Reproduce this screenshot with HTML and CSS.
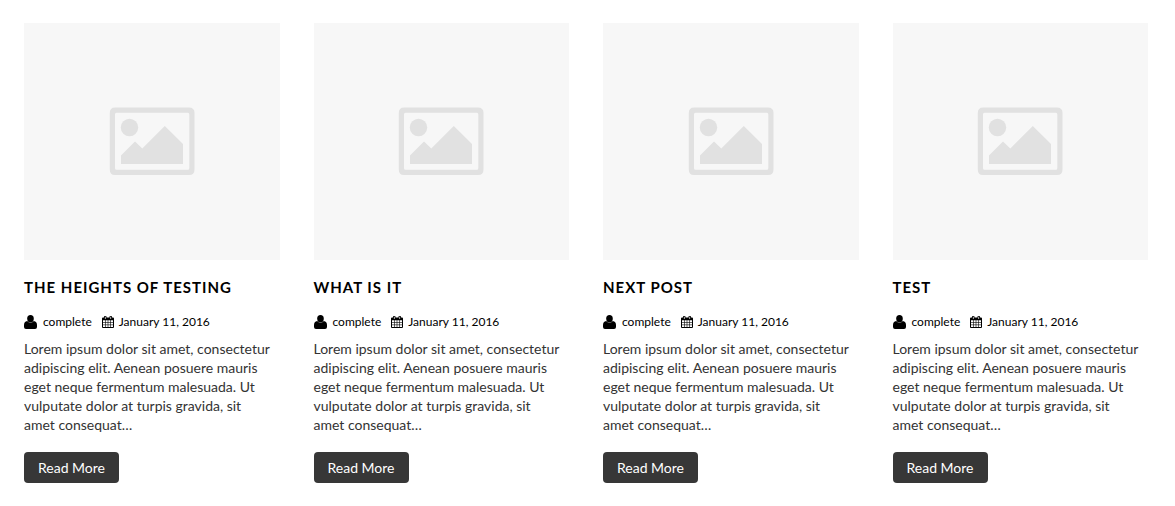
FILE: index.html
```html
<!DOCTYPE html>
<html lang="en">
<head>
<meta charset="utf-8">
<title>Posts</title>
<link rel="stylesheet" href="styles.css">
</head>
<body>
<svg class="sprite" aria-hidden="true">
  <symbol id="picture" viewBox="0 0 86 68">
    <path fill-rule="evenodd" d="M6 .5H80Q85.500 .5 85.500 6V62.500Q85.500 68 80 68H6Q.8 68 .8 62.500V6Q.8 .5 6 .5ZM7.500 5.800Q6 5.800 6 7.300V61.200Q6 62.700 7.500 62.700H79Q80.300 62.700 80.300 61.200V7.300Q80.300 5.800 79 5.800Z"/>
    <circle cx="20.500" cy="20.500" r="8.700"/>
    <path d="M12 57V48.500L26 34.500L33.300 41.600L55.800 19L74 37V57Z"/>
  </symbol>
  <symbol id="user" viewBox="0 0 13 14">
    <ellipse cx="6.500" cy="3.700" rx="3.300" ry="3.700"/>
    <path d="M3.200 6Q0 6.400 0 10V12Q0 14 2 14H11Q13 14 13 12V10Q13 6.400 9.800 6Q8.500 7.700 6.500 7.700T3.200 6Z"/>
  </symbol>
  <symbol id="calendar" viewBox="0 0 12 12">
    <path fill-rule="evenodd" d="M1 1.500H2V.8Q2 0 2.800 0H3.700Q4.500 0 4.500 .8V1.500H7.500V.8Q7.500 0 8.300 0H9.200Q10 0 10 .8V1.500H11Q12 1.500 12 2.500V11Q12 12 11 12H1Q0 12 0 11V2.500Q0 1.500 1 1.500ZM1 4.300V11H11V4.300ZM2.900 .8V3H3.600V.8ZM8.400 .8V3H9.100V.8Z"/>
    <path fill="none" stroke="#000" stroke-width=".6" d="M3.500 4V11M6 4V11M8.500 4V11M1 6.500H11M1 8.800H11"/>
  </symbol>
</svg>
<main class="posts">
  <article class="post">
    <div class="thumb"><svg class="picture"><use href="#picture"/></svg></div>
    <h2 class="title">The Heights of Testing</h2>
    <div class="meta"><svg class="user"><use href="#user"/></svg><span class="author">complete</span><svg class="calendar"><use href="#calendar"/></svg><time datetime="2016-01-11">January 11, 2016</time></div>
    <p class="excerpt">Lorem ipsum dolor sit amet, consectetur adipiscing elit. Aenean posuere mauris eget neque fermentum malesuada. Ut vulputate dolor at turpis gravida, sit amet consequat…</p>
    <a class="more" href="#">Read More</a>
  </article>
  <article class="post">
    <div class="thumb"><svg class="picture"><use href="#picture"/></svg></div>
    <h2 class="title">What is it</h2>
    <div class="meta"><svg class="user"><use href="#user"/></svg><span class="author">complete</span><svg class="calendar"><use href="#calendar"/></svg><time datetime="2016-01-11">January 11, 2016</time></div>
    <p class="excerpt">Lorem ipsum dolor sit amet, consectetur adipiscing elit. Aenean posuere mauris eget neque fermentum malesuada. Ut vulputate dolor at turpis gravida, sit amet consequat…</p>
    <a class="more" href="#">Read More</a>
  </article>
  <article class="post">
    <div class="thumb"><svg class="picture"><use href="#picture"/></svg></div>
    <h2 class="title">Next Post</h2>
    <div class="meta"><svg class="user"><use href="#user"/></svg><span class="author">complete</span><svg class="calendar"><use href="#calendar"/></svg><time datetime="2016-01-11">January 11, 2016</time></div>
    <p class="excerpt">Lorem ipsum dolor sit amet, consectetur adipiscing elit. Aenean posuere mauris eget neque fermentum malesuada. Ut vulputate dolor at turpis gravida, sit amet consequat…</p>
    <a class="more" href="#">Read More</a>
  </article>
  <article class="post">
    <div class="thumb"><svg class="picture"><use href="#picture"/></svg></div>
    <h2 class="title">Test</h2>
    <div class="meta"><svg class="user"><use href="#user"/></svg><span class="author">complete</span><svg class="calendar"><use href="#calendar"/></svg><time datetime="2016-01-11">January 11, 2016</time></div>
    <p class="excerpt">Lorem ipsum dolor sit amet, consectetur adipiscing elit. Aenean posuere mauris eget neque fermentum malesuada. Ut vulputate dolor at turpis gravida, sit amet consequat…</p>
    <a class="more" href="#">Read More</a>
  </article>
</main>
</body>
</html>
```
FILE: styles.css
```css
body {
  margin: 0;
  background: #fff;
  color: #333;
  font-family: Lato, sans-serif;
  font-size: 14px;
  line-height: 19px;
}

.sprite {
  display: none;
}

.posts {
  display: grid;
  grid-template-columns: repeat(4, minmax(0, 1fr));
  gap: 34px;
  padding: 23px 27px 23px 24px;
}

.thumb {
  display: flex;
  align-items: center;
  justify-content: center;
  aspect-ratio: 256 / 237;
  background: #f7f7f7;
}

.picture {
  width: 86px;
  height: 68px;
  fill: #e1e1e1;
}

.title {
  margin: 17px 0;
  color: #000;
  font-size: 15px;
  font-weight: 700;
  line-height: 20px;
  letter-spacing: 1px;
  text-transform: uppercase;
}

.meta {
  display: flex;
  align-items: center;
  margin-bottom: 9px;
  color: #000;
  font-size: 12px;
  line-height: 16px;
}

.user {
  width: 13px;
  height: 14px;
  margin-right: 6px;
}

.author {
  margin-right: 10px;
}

.calendar {
  width: 12px;
  height: 12px;
  margin-right: 5px;
}

.excerpt {
  margin: 0 0 18px;
  padding-right: 5px;
}

.more {
  display: inline-block;
  padding: 6px 14px;
  border-radius: 4px;
  background: #373737;
  color: #fff;
  text-decoration: none;
}
```
